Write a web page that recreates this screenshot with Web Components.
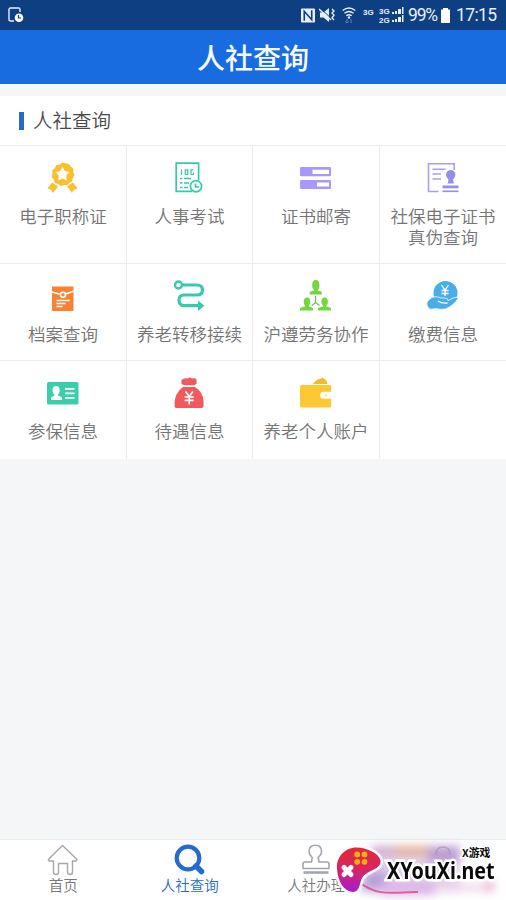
<!DOCTYPE html>
<html lang="zh-CN">
<head>
<meta charset="utf-8">
<title>人社查询</title>
<style>
html,body{margin:0;height:100%;overflow:hidden}
body{font-family:"Noto Sans CJK SC","Noto Sans",sans-serif;font-weight:350;color:#747474}
</style>
</head>
<body>
<query-app></query-app>
<script>
const ICONS = {
medal:`<g fill="#f9bf2d"><path d="M5 20.500 0.500 26.500 4.500 28 6 31 11 24.500ZM26 20.500 30.500 26.500 26.500 28 25 31 20 24.500Z"/><path d="m15.500.5 3 .7 3.300.7 2 2.600 2.600 2-.1 3.400 1.200 3.100-1.700 2.900-.5 3.300-2.900 1.600-2.200 2.500-3.300-.3-3.100.9-2.700-2-3.200-.9-1.100-3.200-2-2.700.7-3.200-.3-3.300 2.500-2.300 1.500-3 3.300-.6Z"/></g><path d="m15.500 5 2.300 4 4.700 1-3.300 3.600.6 4.900-4.300-2-4.300 2 .6-4.900L8.500 10l4.700-1Z" fill="#fff"/>`,
exam:`<g fill="none" stroke="#35c9a5" stroke-width="1.700"><path d="M18 29.300H2.200V1.200H24.600V18"/><circle cx="22" cy="24.200" r="5.600"/><path d="M21.500 21.500V25h3.500M6 16.500h2.500m1.500 0h7M6 21h2.500m1.500 0h5M6 25.500h2.500m1.500 0h4"/><path d="M7.500 7.500v5.500M11.300 7.800h2.400v4.700h-2.400ZM19.500 7.800H17v4.700h2.500v-2" stroke-width="1.200"/></g>`,
bars:`<g fill="#a998fb"><rect y="5" width="31" height="9.300" rx="1.200"/><rect y="18" width="31" height="9" rx="1.200"/></g><path fill="#fff" d="M12.500 7.700H29v4.200H12.500ZM17 20.600h12v3.800H17Z"/>`,
cert:`<g fill="none" stroke="#a8a0ea" stroke-width="1.600"><path d="M11.500 29.500H1.500V1.700H27.200V8M5.500 7.300h13M5.500 12h8.500M5.500 17H14"/></g><g fill="#958ee8"><path d="M21.500 17.500c-5-5-1.500-9.500 2.300-9.500s7 4.500 2.300 9.500l.7 4h-6Z"/><rect x="15.500" y="23.500" width="16" height="2.800"/><rect x="15.500" y="28.500" width="16" height="1.600"/></g>`,
archive:`<path fill="#f98232" d="M5 6.500H26.500V30q0 1-1 1H6q-1 0-1-1Z"/><g fill="none" stroke="#fff"><path d="m5 12 8 2.300m5 0 8.500-3" stroke-width="1.500"/><circle cx="16" cy="14.800" r="2.500" stroke-width="1.600"/><path d="M9.500 20.500h13M9.500 23.500h9M9.500 26.500h6" stroke-width="1.300"/></g>`,
route:`<g fill="none" stroke="#38caae" stroke-width="3.200"><circle cx="4.500" cy="5" r="3.500" stroke-width="2.400"/><path d="M8 5h15q5.500 0 5.500 5t-5.500 5H10q-5 0-5 5.300t5 5.300h16"/></g><path fill="#38caae" d="m24 20.500 6.500 5.200-6.500 5.300Z"/>`,
team:`<g fill="#73d63d"><path d="M12.200 5q0-5 3.600-5t3.600 5-1.500 4.200v1.500q4 .5 4 1.800V14.500H9.700v-2q0-1.300 4-1.800V9.200q-1.500-.4-1.500-4.200Z"/><path d="M3.700 22q0-4.500 3.300-4.500t3.300 4.500q0 2.800-1.500 3.500v1q4.200.8 4.200 2V30.500H0v-2q0-1.200 5-2v-1Q3.700 24 3.700 22ZM21.300 22q0-4.500 3.300-4.500t3.300 4.500q0 2.800-1.500 3.500v1q4.600.8 4.600 2V30.500H18v-2q0-1.200 5-2v-1q-1.700-1-1.700-3.500Z"/></g><path d="M15.500 16v6.500l-3.500 3m3.500-3 4 3" fill="none" stroke="#73b961" stroke-width="1.200"/>`,
pay:`<circle cx="18.500" cy="13" r="12" fill="#48aee9"/><path d="m14.500 5 3.500 5 3.500-5m-3.500 5v6M14.500 10.500h7m-7 3h7" fill="none" stroke="#fff" stroke-width="1.300"/><path d="M1.500 20q4-4 8-3.300 4 1.600 8 1.300 3.500 0 3.500 2.500l6.500-3q3-.8 3.500 1.200-2 4-8.500 8.300-4 3-9 2.300-5-1-8-.3-3 1-4-1-3.500-4 0-8Z" fill="#48aee9" stroke="#fff" stroke-width=".8"/><path d="M11 21q3 2.500 9.500 2" fill="none" stroke="#fff" stroke-width="1.400"/>`,
card:`<rect y="5" width="31.500" height="22.500" rx="1.500" fill="#3bceab"/><path fill="#fff" d="M5.500 13.500q0-4.500 3.600-4.500t3.600 4.500q0 2.700-1.600 3.700v1.500q4 .7 4 2.200v2H4v-2q0-1.500 3.200-2.200v-1.500q-1.700-1-1.700-3.700ZM18 11h9.500v1.800H18Zm0 4.500h9.500v1.800H18Zm0 4.500h9.500v1.800H18Z"/>`,
bag:`<path fill="#f1595d" d="M7.500 3q3-2.500 6-1.500 2.500-2 4.500 0 4-1 4.500 1V7q-3 2-7.500 1-4 1-7.500-1ZM9 10h12q8 5 8.500 14v5q0 2-2 2h-25q-2 0-2-2Q0 16 9 10Z"/><path d="m11.500 14.500 3.700 5 3.700-5m-3.700 5v8M10.700 20h9m-9 3.300h9" fill="none" stroke="#fff" stroke-width="1.700"/>`,
wallet:`<path fill="#fcc834" d="M1.500 8h28q1.700 0 1.700 1.700v5h-8q-3 0-3 3.500t3 3.500h8v7.300q0 1.500-1.700 1.500h-28Q0 30.500 0 29V10q0-2 1.500-2Z"/><path fill="#f0bd32" d="m12.500 7 5-4.500 2.500-.5L22.500.5l4 3L27.500 7Z"/><circle cx="26" cy="18.300" r="1" fill="#e2d6a9"/>`,
home:`<path d="M1.300 15.500 15.500 1.500 30 15.500l-1 1.500h-3.500v11q0 2.500-2.500 2.500t-2.500-2.500v-8.500h-9V28q0 2.500-2.500 2.500T6.500 28V17H2Z" fill="none" stroke="#aaa6aa" stroke-width="1.400" stroke-linejoin="round"/>`,
search:`<circle cx="14" cy="14" r="11.300" fill="none" stroke="#246bd0" stroke-width="4.200"/><path d="m22 22 5.500 5.500" stroke="#246bd0" stroke-width="5.500" stroke-linecap="round"/>`,
stamp:`<g fill="none" stroke="#a3a5ae" stroke-width="1.600" stroke-linejoin="round"><path d="M3 24.500v-4.500q0-2 2-2h6.500l.7-4.500Q9 10.500 9 7.500q0-6.300 6.300-6.300t6.300 6.300q0 3-3.400 6l.8 4.500H27q2 0 2 2V24.500Z"/><path d="M3.500 28.500h25" stroke-width="2.600"/></g>`
};
class Base extends HTMLElement{
  show(html){ if(!this.shadowRoot) this.attachShadow({mode:"open"}).innerHTML=html; }
}
customElements.define("app-icon",class extends Base{
  connectedCallback(){this.show(`<style>:host{display:block;width:32px;height:32px}svg{display:block;overflow:visible}</style><svg width="32" height="32" viewBox="0 0 32 32">${ICONS[this.getAttribute("name")]||""}</svg>`)}
});
customElements.define("status-bar",class extends Base{
  connectedCallback(){this.show(`<style>
:host{display:flex;justify-content:space-between;align-items:center;height:30px;background:#0e3f83;color:#e6f0fb;padding:0 9px 0 8px;box-sizing:border-box;font:400 18px/30px Roboto,sans-serif}
svg{display:block}.r{display:flex;align-items:center}.g{font:700 8px/9px "Liberation Sans",sans-serif}.g span{display:block}
</style>
<svg width="16" height="16" viewBox="0 0 16 16"><path d="M6 14H2.500Q1 14 1 12.500V2.500Q1 1 2.500 1h8Q12 1 12 2.500V5" fill="none" stroke="#e6f0fb" stroke-width="1.400"/><circle cx="11" cy="10.700" r="4.300" fill="#fff"/><path d="M10.500 8v3H13" fill="none" stroke="#0e3f83" stroke-width="1.200"/></svg>
<div class="r">
<svg width="14" height="15" viewBox="0 0 15 15"><rect width="15" height="15" rx="1" fill="#e6f0fb"/><path d="M3.500 13V3l8 9V2" fill="none" stroke="#0e3f83" stroke-width="1.700"/></svg>
<svg style="margin-left:4px" width="17" height="16" viewBox="0 0 17 16"><path d="M1 5.500h3.500L10 1v14l-5.500-4.500H1Z" fill="#e6f0fb"/><path d="m1 1 14 13" stroke="#0e3f83" stroke-width="1"/><path d="m0 2 12 11M13 2l2 2-2 2 2 2-2 3 2 2" fill="none" stroke="#e6f0fb" stroke-width="1.400"/></svg>
<svg style="margin:0 0 0 6px" width="14" height="18" viewBox="0 0 14 18"><g fill="none" stroke="#e6f0fb" stroke-width="1.400"><path d="M.7 4.500q6.300-5 12.600 0M2.500 7.200q4.500-3.500 9 0M4.300 9.700q2.700-2 5.400 0"/></g><circle cx="7" cy="11.500" r="1.200" fill="#e6f0fb"/><path d="M5 13v4m-1.500-1.500L5 17l1.500-1.500M9 17v-4" stroke="#6186b9" fill="none"/></svg>
<div class="g" style="margin:-6px 0 0 7px;width:11px">3G</div>
<div class="g" style="margin:1px 0 0 5px;width:11px"><span>3G</span><span>2G</span></div>
<svg style="margin-left:2px" width="12" height="16" viewBox="0 0 12 16"><path fill="#e6f0fb" d="M0 5h2v2H0ZM3 4h2v3H3ZM6 2h3v5H6ZM10 0h1.500v7H10ZM0 13h2v2H0ZM3 12h2v3H3ZM6 10h3v5H6ZM10 8h1.500v7H10Z"/></svg>
<span style="margin-left:4px;width:30px;font-size:17.500px;letter-spacing:-1.200px">99%</span>
<svg style="margin-left:3px" width="9" height="15" viewBox="0 0 9 15"><path fill="#fff" d="M2 0h5v1.500H9V15H0V1.500h2Z"/></svg>
<span style="margin-left:6px;width:41px;font-size:17.500px;letter-spacing:-.6px">17:15</span>
</div>`)}
});
customElements.define("nav-title",class extends Base{
  connectedCallback(){this.show(`<style>:host{display:block;height:54px;background:#196cdf;color:#f5fbff;text-align:center;font-weight:500;font-size:28px;line-height:54px;margin-bottom:12px}</style><slot></slot>`)}
});
customElements.define("section-title",class extends Base{
  connectedCallback(){this.show(`<style>:host{display:flex;align-items:center;height:49px;box-sizing:border-box;padding-left:19px;gap:9px;background:#fff;color:#4a4a4a;font-size:19.500px;line-height:47px}i{width:5px;height:18px;background:#2b67cb;margin-top:1px}span{height:49px}</style><i></i><span><slot></slot></span>`)}
});
customElements.define("menu-cell",class extends Base{
  connectedCallback(){const n=this.getAttribute("icon");this.show(`<style>
:host{display:flex;flex-direction:column;align-items:center;padding-top:16px;gap:12px;border:solid #ececee;border-width:1px 1px 0 0;background:#fff;box-sizing:border-box;font-size:17.500px;line-height:20.500px;text-align:center;white-space:pre-line}
:host(:nth-child(4n)){border-right:0}</style>${n?`<app-icon name="${n}"></app-icon>`:""}<span><slot></slot></span>`)}
});
customElements.define("menu-grid",class extends Base{
  connectedCallback(){this.show(`<style>:host{display:grid;grid-template-columns:127px 126px 127px 126px;grid-template-rows:118px 97px 99px}</style><slot></slot>`)}
});
customElements.define("tab-item",class extends Base{
  connectedCallback(){this.show(`<style>:host{display:flex;flex-direction:column;align-items:center;padding-top:4px;font-size:14.500px;line-height:20px;color:#777}:host([active]){color:#246bd0}app-icon{height:31px}</style><app-icon name="${this.getAttribute("icon")}"></app-icon><span><slot></slot></span>`)}
});
customElements.define("tab-bar",class extends Base{
  connectedCallback(){this.show(`<style>:host{display:grid;grid-template-columns:repeat(4,1fr);height:61px;margin-top:auto;background:#fff;border-top:1px solid #eceeef;box-sizing:border-box}</style><slot></slot>`)}
});
customElements.define("site-badge",class extends Base{
  connectedCallback(){this.show(`<style>
:host{position:absolute;left:330px;top:838px;width:176px;height:62px;overflow:hidden;color:#090909}
svg{position:absolute;left:0;top:0}
b{position:absolute;white-space:nowrap}
.n{left:57px;top:18px;font:700 23.500px/28px "Noto Sans",sans-serif;transform:scaleX(.84);transform-origin:0 0;-webkit-text-stroke:5px #fff;paint-order:stroke fill}
.x{left:132px;top:6px;font-size:10.800px;line-height:16px;font-weight:700;-webkit-text-stroke:3px #fff;paint-order:stroke fill}
</style>
<svg width="176" height="62" viewBox="0 0 176 62"><defs><filter id="f" x="-30%" y="-50%" width="160%" height="200%"><feGaussianBlur stdDeviation="5"/></filter><linearGradient id="g" x2="0" y2="1"><stop stop-color="#e32836"/><stop offset=".5" stop-color="#d72466"/><stop offset="1" stop-color="#a51bd4"/></linearGradient></defs>
<g filter="url(#f)"><path fill="#e3d2ea" d="M40 10h90v44H40Z"/><path d="M42 8h28v10H42Z" fill="#d0aacb"/><path d="M66 8h32v10H66Z" fill="#e2ae96"/><path d="M98 8h32v18H98Z" fill="#bb9ed2"/><path d="M36 33h22v20H30Z" fill="#b5a0d6"/><path d="M50 44h55v13H50Z" fill="#dcb2e8"/><path d="M105 46h60v7h-60Z" fill="#edd4ea"/><path d="M155 44h8v8h-8Z" fill="#eb9dba"/></g>
<path d="M106 17q0-8 7-8t7 8" fill="none" stroke="#a08cae" stroke-opacity=".6" stroke-width="1.500"/>
<path d="M28 43C48 61 70 53 88 54" fill="none" stroke="#d94686" stroke-opacity=".8" stroke-width="2"/>
<path d="M7 31C6 18 16 9 27 9.500c9 .5 22 5 23.500 13 .8 9-11.500 9-17.500 16-4 5-2 15-10 15.500C13 53 8 43 7 31Z" fill="url(#g)" stroke="#fff" stroke-width="5" style="paint-order:stroke"/>
<g fill="#ffae12"><circle cx="27.200" cy="16.500" r="2.900"/><circle cx="34.500" cy="16.500" r="2.900"/><circle cx="27.200" cy="23.800" r="2.900"/><circle cx="34.500" cy="23.800" r="2.900"/></g>
<path d="m14 29.500 7 7m0-7-7 7" stroke="#fff" stroke-width="5" stroke-linecap="round"/></svg>
<b class="x">X游戏</b><b class="n">XYouXi.net</b>`)}
});
customElements.define("query-app",class extends Base{
  connectedCallback(){
    const items=[["medal","电子职称证"],["exam","人事考试"],["bars","证书邮寄"],["cert","社保电子证书\n真伪查询"],["archive","档案查询"],["route","养老转移接续"],["team","沪遵劳务协作"],["pay","缴费信息"],["card","参保信息"],["bag","待遇信息"],["wallet","养老个人账户"],["",""]];
    this.show(`<style>:host{display:flex;flex-direction:column;position:relative;width:506px;height:900px;background:#f4f6f8;overflow:hidden}</style>
<status-bar></status-bar><nav-title>人社查询</nav-title><section-title>人社查询</section-title>
<menu-grid>${items.map(([i,t])=>`<menu-cell icon="${i}">${t}</menu-cell>`).join("")}</menu-grid>
<tab-bar><tab-item icon="home">首页</tab-item><tab-item icon="search" active>人社查询</tab-item><tab-item icon="stamp">人社办理</tab-item></tab-bar>
<site-badge></site-badge>`)}
});
</script>
</body>
</html>
